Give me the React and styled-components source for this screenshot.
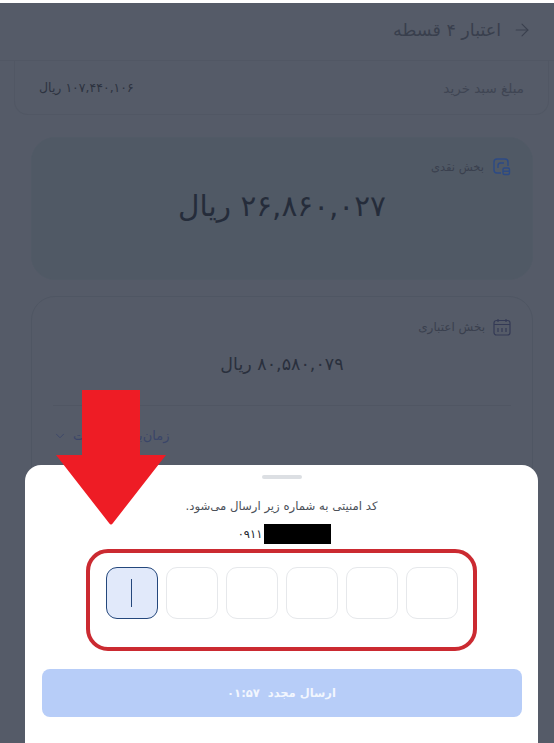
import React from 'react';
import styled, { createGlobalStyle } from 'styled-components';
import { ArrowRight, ChevronDown } from 'lucide-react';

const GlobalStyle = createGlobalStyle`
  html, body {
    margin: 0;
    padding: 0;
    background: #fff;
    font-family: "DejaVu Sans", "Noto Sans", sans-serif;
  }
`;

const Page = styled.div`
  position: relative;
  width: 554px;
  height: 743px;
  padding-top: 3px;
  box-sizing: border-box;
  overflow: hidden;
  background: #fff;
  direction: rtl;
`;
const Dimmed = styled.div`
  height: 740px;
  background: #555b68;
  display: flex;
  flex-direction: column;
`;
const Header = styled.div`
  height: 58px;
  box-sizing: border-box;
  padding: 0 22px 3px 0;
  display: flex;
  align-items: center;
  gap: 11px;
  color: #3a404e;
  border-bottom: 1px solid #515764;
`;
const Title = styled.div`
  font-size: 17.5px;
  color: #393f4d;
`;
const TotalRow = styled.div`
  margin: 0 5px 0 14px;
  height: 54px;
  box-sizing: border-box;
  padding: 0 24px;
  display: flex;
  align-items: center;
  justify-content: space-between;
  border: 1px solid #515764;
  border-top: 0;
  border-radius: 0 0 14px 14px;
`;
const TotalLabel = styled.div`
  font-size: 13.5px;
  color: #3f4553;
`;
const TotalValue = styled.div`
  font-size: 12.5px;
  color: #2d3340;
`;
const Card = styled.div`
  margin: ${(p) => p.$top}px 21px 0 31px;
  height: ${(p) => p.$height}px;
  box-sizing: border-box;
  padding: ${(p) => p.$pad}px 21px 0;
  border-radius: 24px;
  background: ${(p) => (p.$filled ? '#505965' : 'transparent')};
  border: 1px solid ${(p) => (p.$filled ? '#515a66' : '#4f5663')};
`;
const CardHead = styled.div`
  display: flex;
  align-items: center;
  gap: 8px;
  font-size: ${(p) => p.$size}px;
  color: #3a404e;
`;
const CashAmount = styled.div`
  margin-top: 13px;
  text-align: center;
  font-size: 29.5px;
  color: #252c3a;
`;
const CreditAmount = styled.div`
  margin-top: 18px;
  text-align: center;
  font-size: 17.5px;
  color: #2a303d;
`;
const Divider = styled.div`
  margin-top: 31px;
  border-top: 1px solid #505663;
`;
const Schedule = styled.div`
  margin-top: 22px;
  display: flex;
  align-items: center;
  justify-content: flex-end;
  gap: 6px;
  font-size: 13px;
  color: #3a4568;
`;
const Sheet = styled.div`
  position: absolute;
  left: 25px;
  right: 16px;
  bottom: 0;
  height: 278px;
  box-sizing: border-box;
  background: #fff;
  border-radius: 16px 16px 0 0;
  display: flex;
  flex-direction: column;
  align-items: center;
  padding-top: 10px;
`;
const Handle = styled.div`
  width: 40px;
  height: 4px;
  margin-left: 1px;
  border-radius: 2px;
  background: #dcdfe3;
`;
const Hint = styled.div`
  margin-top: 19px;
  font-size: 11.7px;
  line-height: 16px;
  color: #4b5058;
`;
const PhoneRow = styled.div`
  margin: 10px 0 0 6px;
  height: 20px;
  display: flex;
  align-items: center;
  gap: 2px;
  direction: ltr;
  font-size: 11.5px;
  color: #23272e;
`;
const Masked = styled.div`
  width: 67px;
  height: 20px;
  background: #000;
`;
const OtpRow = styled.div`
  position: relative;
  margin-top: 23px;
  display: flex;
  direction: ltr;
  gap: 8px;
`;
const OtpBox = styled.div`
  width: 52px;
  height: 52px;
  box-sizing: border-box;
  border-radius: 11px;
  display: flex;
  align-items: center;
  justify-content: center;
  background: ${(p) => (p.$active ? '#e1e9fa' : '#fff')};
  border: 1px solid ${(p) => (p.$active ? '#24477c' : '#e6e8eb')};
`;
const Caret = styled.div`
  width: 1px;
  height: 28px;
  background: #24477c;
`;
const RedFrame = styled.div`
  position: absolute;
  left: -20px;
  right: -19px;
  top: -18px;
  height: 102px;
  box-sizing: border-box;
  border: 4px solid #cb2a31;
  border-radius: 22px;
  pointer-events: none;
`;
const ResendButton = styled.div`
  width: 480px;
  height: 48px;
  margin-top: 50px;
  display: flex;
  align-items: center;
  justify-content: center;
  gap: 8px;
  border-radius: 8px;
  background: #b7cdf8;
  color: #f2f6fe;
  font-size: 11.5px;
  font-weight: 700;
`;
const RedArrow = styled.svg`
  position: absolute;
  left: 56px;
  top: 390px;
`;

const CashIcon = () => (
  <svg width="19" height="19" viewBox="0 0 19 19" fill="none" stroke="#2c4a85" strokeWidth="1.4">
    <path d="M9 16H5a3 3 0 0 1-3-3V5a3 3 0 0 1 3-3h8a3 3 0 0 1 3 3v4" />
    <path d="M6 11V8.500A2.500 2.500 0 0 1 8.500 6H12" />
    <rect x="11" y="11" width="6.500" height="6.500" rx="1.500" />
    <path d="M11 14.200h6.500" />
  </svg>
);

const CalendarIcon = () => (
  <svg width="18" height="18" viewBox="0 0 18 18" fill="none" stroke="#343a55" strokeWidth="1.200">
    <rect x="1" y="2.500" width="16" height="14.500" rx="2.500" />
    <path d="M1 6.500h16M5 1v3M13 1v3M5 10v4M9 10v4M13 10v4" />
  </svg>
);

const App = () => {
  const boxes = [0, 1, 2, 3, 4, 5];
  return (
    <Page>
      <GlobalStyle />
      <Dimmed>
        <Header>
          <ArrowRight size={20} strokeWidth={1.3} />
          <Title>اعتبار ۴ قسطه</Title>
        </Header>
        <TotalRow>
          <TotalLabel>مبلغ سبد خرید</TotalLabel>
          <TotalValue>۱۰۷,۴۴۰,۱۰۶ ریال</TotalValue>
        </TotalRow>
        <Card $filled $top={22} $height={143} $pad={19}>
          <CardHead $size={11.5}>
            <CashIcon />
            بخش نقدی
          </CardHead>
          <CashAmount>۲۶,۸۶۰,۰۲۷ ریال</CashAmount>
        </Card>
        <Card $top={16} $height={260} $pad={21}>
          <CardHead $size={12}>
            <CalendarIcon />
            بخش اعتباری
          </CardHead>
          <CreditAmount>۸۰,۵۸۰,۰۷۹ ریال</CreditAmount>
          <Divider />
          <Schedule>
            <span>زمان‌بندی پرداخت</span>
            <ChevronDown size={14} strokeWidth={1.5} />
          </Schedule>
        </Card>
      </Dimmed>
      <Sheet>
        <Handle />
        <Hint>کد امنیتی به شماره زیر ارسال می‌شود.</Hint>
        <PhoneRow>
          ۰۹۱۱
          <Masked />
        </PhoneRow>
        <OtpRow>
          <RedFrame />
          {boxes.map((i) => (
            <OtpBox key={i} $active={i === 0}>
              {i === 0 && <Caret />}
            </OtpBox>
          ))}
        </OtpRow>
        <ResendButton>
          <span>ارسال مجدد</span>
          <span>۰۱:۵۷</span>
        </ResendButton>
      </Sheet>
      <RedArrow width="110" height="136" viewBox="0 0 110 136">
        <path d="M26 0H84V65H110L57 133Q55 136 53 133L0 65H26Z" fill="#ee1c25" />
      </RedArrow>
    </Page>
  );
};

export default App;
